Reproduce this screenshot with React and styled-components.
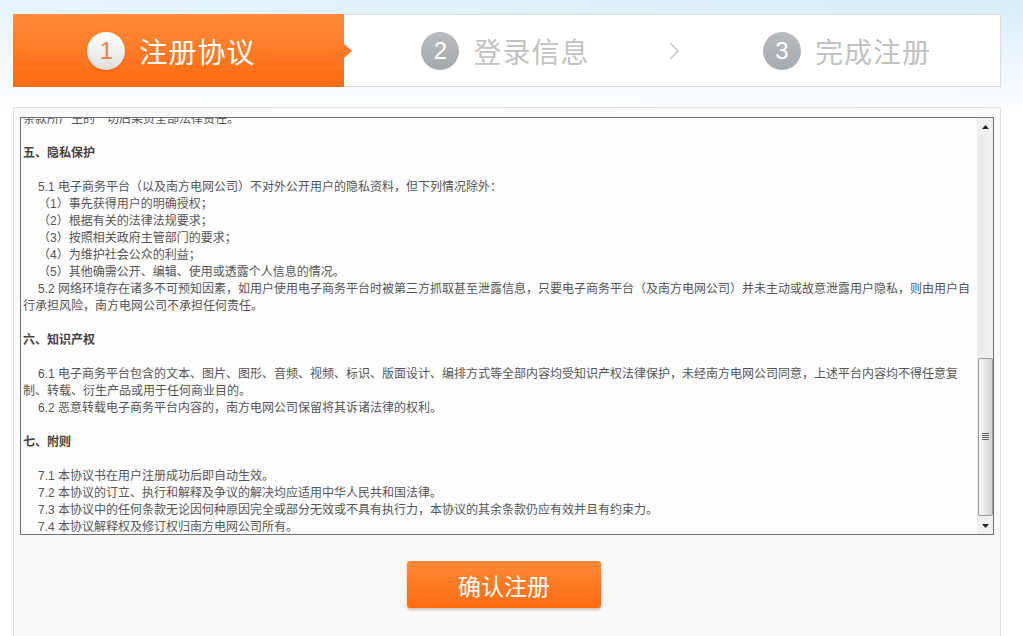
import styled, { createGlobalStyle } from "styled-components";

const GlobalStyle = createGlobalStyle`
    html, body {
        margin: 0;
        padding: 0;
        height: 100%;
        overflow: hidden;
    }
    body {
        background:
            linear-gradient(to bottom, rgba(255, 255, 255, 0) 0, #ffffff 115px),
            linear-gradient(to right, #e6f3fb, #d6ecf8);
        font-family: "Liberation Sans", "Noto Sans CJK SC", sans-serif;
    }
`;

const Page = styled.div`
    width: 988px;
    margin-left: 13px;
    padding-top: 14px;
`;

// 步骤条
const StepBar = styled.div`
    display: grid;
    grid-template-columns: 330px 323px 14px 1fr;
    height: 71px;
    background: #fff;
    border: 1px solid #dcdcdc;
`;

const Step = styled.div`
    position: relative;
    display: flex;
    align-items: center;
    justify-content: center;
    gap: 14px;
    padding: ${(p) => p.$pad || "0"};
    background: ${(p) => (p.$active ? "linear-gradient(to bottom, #ff8b3d, #ff6a0f)" : "transparent")};
    margin: ${(p) => (p.$active ? "-1px 0 -1px -1px" : "0")};

    ${(p) =>
        p.$active &&
        `
        &::after {
            content: "";
            position: absolute;
            right: -8px;
            top: 50%;
            margin-top: -7px;
            border-top: 7px solid transparent;
            border-bottom: 7px solid transparent;
            border-left: 8px solid #ff7a25;
        }
    `}
`;

const Circle = styled.span`
    width: 38px;
    height: 38px;
    border-radius: 50%;
    display: flex;
    align-items: center;
    justify-content: center;
    font-family: "Liberation Sans", sans-serif;
    font-size: 24px;
    color: ${(p) => (p.$active ? "#e0834c" : "#fff")};
    background: ${(p) =>
        p.$active
            ? "linear-gradient(to bottom, #ffffff, #dedede)"
            : "linear-gradient(to bottom, #b9bbbe, #a7aaad)"};
    box-shadow: ${(p) => (p.$active ? "0 1px 2px rgba(150, 60, 0, 0.35)" : "none")};
`;

const StepLabel = styled.span`
    font-family: "Noto Sans CJK SC", sans-serif;
    font-size: 28px;
    letter-spacing: 1px;
    color: ${(p) => (p.$active ? "#fff" : "#c2c2c2")};
`;

const Chevron = styled.div`
    display: flex;
    align-items: center;
    justify-content: center;
`;

// 协议内容面板
const Panel = styled.div`
    margin-top: 20px;
    height: 560px;
    background: #fafafa;
    border: 1px solid #e0e0e0;
    padding: 9px 6px 0;
`;

const TextBox = styled.div`
    display: flex;
    height: 416px;
    border: 1px solid #6e6e6e;
    background: #fdfdfd;
`;

const Content = styled.div`
    flex: 1;
    overflow: hidden;
    padding: 0 4px 0 2px;
    font-family: "Liberation Sans", "Noto Sans CJK SC", sans-serif;
    font-size: 12px;
    line-height: 17px;
    color: #555;
`;

const Scrolled = styled.div`
    margin-top: -7px;
`;

const Line = styled.div`
    white-space: nowrap;
    text-indent: ${(p) => (p.$indent ? "15px" : "0")};
`;

const Heading = styled.div`
    margin: 17px 0;
    font-weight: bold;
    color: #444;
`;

const ScrollBar = styled.div`
    width: 16px;
    display: flex;
    flex-direction: column;
    background: linear-gradient(to right, #e8e8e8, #f2f2f2);
`;

const ScrollButton = styled.div`
    height: 17px;
    display: flex;
    align-items: center;
    justify-content: center;
    background: #f0f0f0;
`;

const Track = styled.div`
    flex: 1;
    display: flex;
    flex-direction: column;
    justify-content: flex-end;
    padding: 0 0 1px 1px;
`;

const Thumb = styled.div`
    height: 156px;
    border: 1px solid #9b9b9b;
    border-radius: 2px;
    background: linear-gradient(to right, #f4f4f4, #e2e2e2 60%, #d3d3d3);
    display: flex;
    align-items: center;
    justify-content: center;
`;

const Footer = styled.div`
    display: flex;
    justify-content: center;
    padding: 26px 6px 0 0;
`;

const ConfirmButton = styled.button`
    width: 194px;
    height: 47px;
    border: none;
    border-radius: 3px;
    background: linear-gradient(to bottom, #ff8a36, #ff6a10);
    box-shadow: 0 2px 3px rgba(120, 60, 20, 0.3);
    color: #fff;
    font-family: "Noto Sans CJK SC", sans-serif;
    font-size: 23px;
    cursor: pointer;
`;

const steps = ["注册协议", "登录信息", "完成注册"];

function Arrow({ up }) {
    return (
        <svg width="7" height="4" viewBox="0 0 7 4">
            <polygon points={up ? "0,4 3.5,0 7,4" : "0,0 3.5,4 7,0"} fill="#222" />
        </svg>
    );
}

function App() {
    return (
        <>
            <GlobalStyle />
            <Page>
                <StepBar>
                    <Step $active $pad="0 14px 0 0">
                        <Circle $active>1</Circle>
                        <StepLabel $active>{steps[0]}</StepLabel>
                    </Step>
                    <Step>
                        <Circle>2</Circle>
                        <StepLabel>{steps[1]}</StepLabel>
                    </Step>
                    <Chevron>
                        <svg width="12" height="18" viewBox="0 0 12 18">
                            <polyline points="2,1 10,9 2,17" fill="none" stroke="#c4c4c4" strokeWidth="1.5" />
                        </svg>
                    </Chevron>
                    <Step $pad="0 0 0 13px">
                        <Circle>3</Circle>
                        <StepLabel>{steps[2]}</StepLabel>
                    </Step>
                </StepBar>

                <Panel>
                    <TextBox>
                        <Content>
                            <Scrolled>
                                <Line>条款所产生的一切后果负全部法律责任。</Line>
                                <Heading>五、隐私保护</Heading>
                                <Line $indent>5.1 电子商务平台（以及南方电网公司）不对外公开用户的隐私资料，但下列情况除外：</Line>
                                <Line $indent>（1）事先获得用户的明确授权；</Line>
                                <Line $indent>（2）根据有关的法律法规要求；</Line>
                                <Line $indent>（3）按照相关政府主管部门的要求；</Line>
                                <Line $indent>（4）为维护社会公众的利益；</Line>
                                <Line $indent>（5）其他确需公开、编辑、使用或透露个人信息的情况。</Line>
                                <Line $indent>5.2 网络环境存在诸多不可预知因素，如用户使用电子商务平台时被第三方抓取甚至泄露信息，只要电子商务平台（及南方电网公司）并未主动或故意泄露用户隐私，则由用户自</Line>
                                <Line>行承担风险，南方电网公司不承担任何责任。</Line>
                                <Heading>六、知识产权</Heading>
                                <Line $indent>6.1 电子商务平台包含的文本、图片、图形、音频、视频、标识、版面设计、编排方式等全部内容均受知识产权法律保护，未经南方电网公司同意，上述平台内容均不得任意复</Line>
                                <Line>制、转载、衍生产品或用于任何商业目的。</Line>
                                <Line $indent>6.2 恶意转载电子商务平台内容的，南方电网公司保留将其诉诸法律的权利。</Line>
                                <Heading>七、附则</Heading>
                                <Line $indent>7.1 本协议书在用户注册成功后即自动生效。</Line>
                                <Line $indent>7.2 本协议的订立、执行和解释及争议的解决均应适用中华人民共和国法律。</Line>
                                <Line $indent>7.3 本协议中的任何条款无论因何种原因完全或部分无效或不具有执行力，本协议的其余条款仍应有效并且有约束力。</Line>
                                <Line $indent>7.4 本协议解释权及修订权归南方电网公司所有。</Line>
                            </Scrolled>
                        </Content>
                        <ScrollBar>
                            <ScrollButton>
                                <Arrow up />
                            </ScrollButton>
                            <Track>
                                <Thumb>
                                    <svg width="7" height="8" viewBox="0 0 7 8">
                                        <path d="M0 0.5H7M0 2.5H7M0 4.5H7M0 6.5H7" stroke="#666" strokeWidth="1" />
                                    </svg>
                                </Thumb>
                            </Track>
                            <ScrollButton>
                                <Arrow />
                            </ScrollButton>
                        </ScrollBar>
                    </TextBox>
                    <Footer>
                        <ConfirmButton>确认注册</ConfirmButton>
                    </Footer>
                </Panel>
            </Page>
        </>
    );
}

export default App;
